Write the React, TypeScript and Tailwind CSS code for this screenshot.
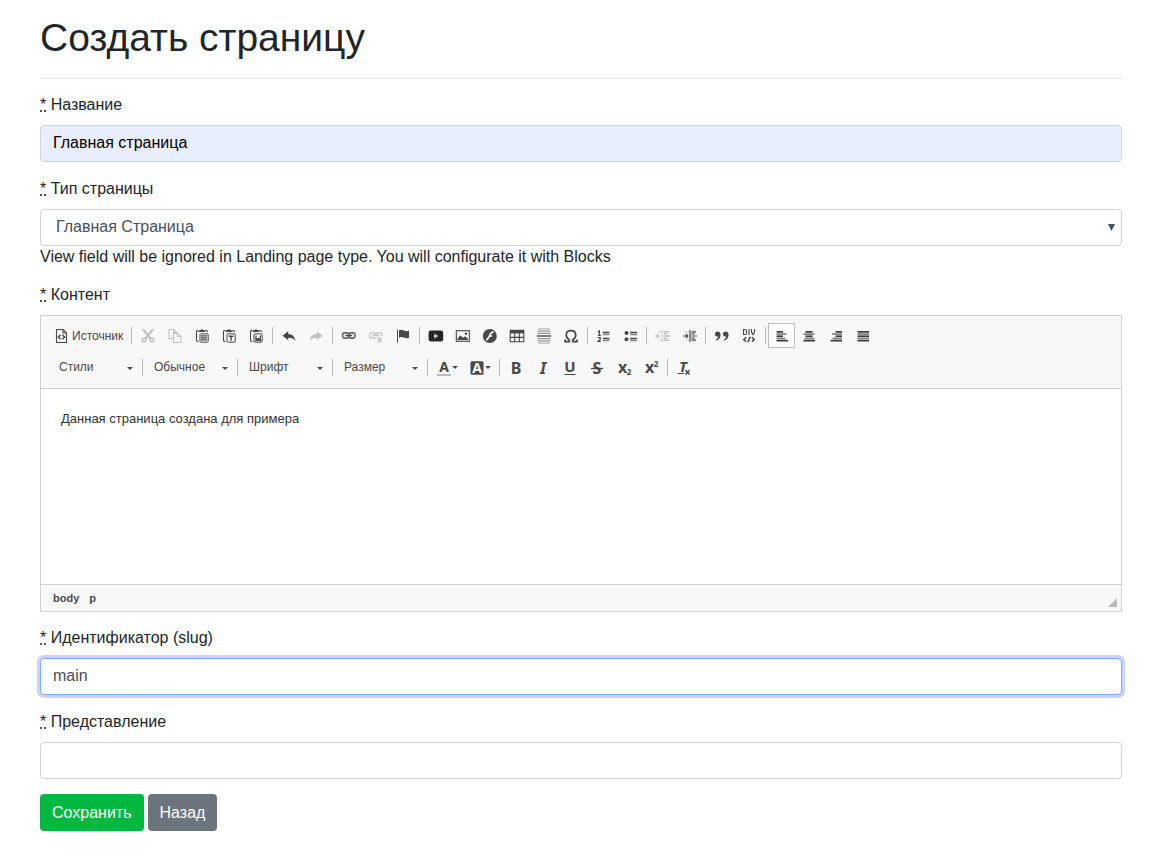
import { useState } from 'react';
import type { ReactNode } from 'react';

const INK = '#484848';

function Icon({ children, size = 16 }: { children: ReactNode; size?: number }) {
  return (
    <svg
      width={size}
      height="16"
      viewBox={`0 0 ${size} 16`}
      fill="none"
      stroke={INK}
      aria-hidden="true"
      className="shrink-0 overflow-visible"
    >
      {children}
    </svg>
  );
}

const Glyph = ({ x = 8, y, size, children, className = 'font-bold', fill = INK }: {
  x?: number; y: number; size: number; children: string; className?: string; fill?: string;
}) => (
  <text
    x={x}
    y={y}
    fontSize={size}
    textAnchor="middle"
    fill={fill}
    stroke="none"
    className={`font-['Noto_Sans','Open_Sans',sans-serif] ${className}`}
  >
    {children}
  </text>
);

const Bars = ({ rows }: { rows: [number, number][] }) => (
  <>
    {rows.map(([x, w], i) => (
      <rect key={i} x={x} y={3 + i * 2.2} width={w} height="1.7" fill={i % 2 ? '#808080' : '#3a3a3a'} stroke="none" />
    ))}
  </>
);

const Clipboard = ({ children }: { children: ReactNode }) => (
  <Icon>
    <path d="M4 2.5H3.2Q2.5 2.5 2.5 3.5V12.5Q2.5 13.5 4.5 13.5M11.5 2.5H12.5Q13.5 2.5 13.5 4.2" strokeWidth="1.1" />
    <path d="M4.5 4V2.3H6.3Q8 .2 9.7 2.3H11.5V4Z" fill={INK} stroke="none" />
    <rect x="6" y="5.8" width="8.2" height="8.4" rx="1" />
    {children}
  </Icon>
);

const icons = {
  source: (
    <Icon size={13}>
      <path d="M1.5 1.5H8L11.5 5V14.5H1.5ZM8 1.5V5H11.5" strokeWidth="1.1" />
      <path d="M5.6 6.8 3.4 9 5.6 11.2M7.4 6.8 9.6 9 7.4 11.2" strokeWidth="1.5" />
    </Icon>
  ),
  cut: (
    <Icon>
      <path d="M3 1.5 10.8 10.8M13 1.5 5.2 10.8" strokeWidth="2.2" />
      <circle cx="4" cy="12" r="1.8" strokeWidth="1.5" />
      <circle cx="12" cy="12" r="1.8" strokeWidth="1.5" />
    </Icon>
  ),
  copy: (
    <Icon>
      <path d="M6 10.5H2V1.5H6.7L9.5 4.2V5M6.5 1.5V4.5H9.5" strokeWidth="1.1" />
      <path d="M6.5 5.5H10.7L14 8.3V14.5H6.5ZM10.5 5.5V8.5H14" fill="#f8f8f8" strokeWidth="1.1" />
    </Icon>
  ),
  paste: <Clipboard><path d="M7 7.8H13M7 9.8H13M7 11.8H13" strokeWidth="1.3" /></Clipboard>,
  pasteText: <Clipboard><path d="M7.8 8.3H12.4M10.1 8.3V12.8" strokeWidth="1.4" /></Clipboard>,
  pasteWord: <Clipboard><path d="M8 7.5V12.5L10.1 10.5 12.3 12.5V7.5M8 12.3H12.3" strokeWidth="1.3" /></Clipboard>,
  undo: (
    <Icon><path d="M1.5 7.7 7.2 3.2V6Q13.3 6.2 14.5 13 11.7 9.6 7.2 9.8V12.2Z" fill={INK} stroke="none" /></Icon>
  ),
  redo: (
    <Icon><path d="M14.5 7.7 8.8 3.2V6Q2.7 6.2 1.5 13 4.3 9.6 8.8 9.8V12.2Z" fill={INK} stroke="none" /></Icon>
  ),
  link: (
    <Icon>
      <rect x="1.6" y="4.9" width="6.2" height="5.2" rx="2" stroke="#666" strokeWidth="1.6" />
      <rect x="7.8" y="4.9" width="6.2" height="5.2" rx="2" stroke="#666" strokeWidth="1.6" />
      <path d="M4.3 7.5H11.3" strokeWidth="1.5" />
    </Icon>
  ),
  unlink: (
    <Icon>
      <path d="M8 10.1H4Q1.6 10.1 1.6 8.1V6.9Q1.6 4.9 4 4.9H5.8Q7.8 4.9 7.8 6.9V8.1M7.8 8V6.9Q7.8 4.9 9.8 4.9H12Q14 4.9 14 6.9V8.1M4.3 7.5H11.3" strokeWidth="1.4" />
      <path d="M9.5 9.5 13.5 13.8M13.5 9.5 9.5 13.8" strokeWidth="1.5" />
    </Icon>
  ),
  flag: (
    <Icon>
      <path d="M2.5 1.5V14.5" />
      <path d="M4 2.2Q6.5 1 9 2.5T14 2.4V9.8Q11.5 11 9 9.6T4 9.7Z" fill={INK} stroke="none" />
    </Icon>
  ),
  video: (
    <Icon>
      <rect x=".6" y="2.6" width="14.6" height="11" rx="2.4" fill="#262626" stroke="none" />
      <path d="M6.2 5.8V10.4L10.4 8.1Z" fill="#d8d8d8" stroke="none" />
    </Icon>
  ),
  image: (
    <Icon>
      <rect x="1.3" y="2.7" width="13" height="10.6" strokeWidth="1.1" />
      <path d="M2.6 12V10.2L5.4 7.4 8 9.8 10.3 8.3 13.1 11V12Z" fill={INK} stroke="none" />
      <circle cx="11" cy="5.7" r="1.2" fill={INK} stroke="none" />
    </Icon>
  ),
  flash: (
    <Icon>
      <circle cx="7.8" cy="8" r="7" fill={INK} stroke="none" />
      <path d="M11.6 3.8Q8.8 4.2 7.9 7T4.3 12.3M7.1 8H10.2" stroke="#f8f8f8" strokeWidth="1.7" />
    </Icon>
  ),
  table: (
    <Icon>
      <path d="M1.2 5V13.7H14.8V5M1.2 9.4H14.8M5.7 5V13.7M10.3 5V13.7" strokeWidth="1.1" />
      <rect x=".7" y="1.8" width="14.6" height="3.6" fill={INK} stroke="none" />
    </Icon>
  ),
  rule: (
    <Icon>
      <path d="M2 1H14M2 3.2H14M2 5.4H14M2 10.6H14M2 12.8H14M2 15H14" stroke="#999" strokeWidth="1.2" />
      <path d="M1 8H15" strokeWidth="1.4" />
    </Icon>
  ),
  omega: (
    <Icon>
      <path d="M2 13.7H6.3V12Q3.3 10.4 3.3 7.1 3.3 2.6 8 2.6T12.7 7.1Q12.7 10.4 9.7 12V13.7H14M2 11.6V14.2M14 11.6V14.2" strokeWidth="1.7" />
    </Icon>
  ),
  numbered: (
    <Icon>
      <path d="M2 4 3.4 3V7.3M2 7.3H4.8M1.8 9.7H4.3V11.3L2.2 13.3H4.8" strokeWidth="1.2" />
      <path d="M6.8 4.5H13.5M6.8 10.5H13.5" strokeWidth="1.3" />
      <path d="M6.8 6.5H13.5M6.8 12.5H13.5" stroke="#858585" strokeWidth="1.3" />
    </Icon>
  ),
  bulleted: (
    <Icon>
      <circle cx="3.5" cy="5" r="2" fill={INK} stroke="none" />
      <circle cx="3.5" cy="11.2" r="2" fill={INK} stroke="none" />
      <path d="M7 4.5H14M7 10.5H14" strokeWidth="1.3" />
      <path d="M7 6.5H14M7 12.5H14" stroke="#858585" strokeWidth="1.3" />
    </Icon>
  ),
  outdent: (
    <Icon>
      <path d="M7.5 2V14" strokeDasharray="1.4 .8" strokeWidth="1.3" />
      <path d="M9 3.8H14M9 5.8H12.5M9 8H15M9 10.2H12.5M9 12.2H14" strokeWidth="1.5" />
      <path d="M1 8H6M3.5 5.8 1.2 8 3.5 10.2M3.5 4H7M4.5 12H7" strokeWidth="1.2" />
    </Icon>
  ),
  indent: (
    <Icon>
      <path d="M8 2V14" strokeWidth="1.2" />
      <path d="M9.5 3.8H14M9.5 5.8H12.5M9.5 8H15M9.5 10.2H12.5M9.5 12.2H14" strokeWidth="1.2" />
      <path d="M1 8H5.6M3.8 5.8 6 8 3.8 10.2" strokeWidth="1.2" />
      <path d="M3.5 4H7M4.5 12H7" stroke="#999" strokeDasharray="1 1" />
    </Icon>
  ),
  quote: (
    <Icon>
      <path d="M1 6Q1 3.5 3.6 3.5 6.6 3.6 6.6 7 6.4 11.3 2.2 12.6L1.8 11.7Q4 10.6 4.2 8.6 1 8.8 1 6ZM9 6Q9 3.5 11.6 3.5 14.6 3.6 14.6 7 14.4 11.3 10.2 12.6L9.8 11.7Q12 10.6 12.2 8.6 9 8.8 9 6Z" fill={INK} stroke="none" />
    </Icon>
  ),
  div: (
    <Icon>
      <path d="M2.5 1.5V6.5H4Q5.5 6.5 5.5 5V3Q5.5 1.5 4 1.5ZM8 1V7M10.5 1V4L12 6.7 13.5 4V1" strokeWidth="1.1" />
      <path d="M5 9.3 2.8 11.5 5 13.7M11 9.3 13.2 11.5 11 13.7M9.3 8.8 6.9 14.2" strokeWidth="1.6" />
    </Icon>
  ),
  left: <Icon><Bars rows={[[2.5, 6.5], [2.5, 10], [2.5, 6.5], [2.5, 9], [2.5, 11.5]]} /></Icon>,
  center: <Icon><Bars rows={[[4.5, 7], [2.5, 11], [4.5, 7], [3.5, 9.5], [2.5, 11.5]]} /></Icon>,
  right: <Icon><Bars rows={[[7.5, 6.5], [4, 10], [7.5, 6.5], [4.5, 9.5], [2.5, 11.5]]} /></Icon>,
  justify: <Icon><Bars rows={[[2.5, 11.5], [2.5, 11.5], [2.5, 11.5], [2.5, 11.5], [2.5, 11.5]]} /></Icon>,
  bold: <Icon><Glyph y={14} size={16}>B</Glyph></Icon>,
  italic: <Icon><Glyph y={14} size={16} className="font-bold italic">I</Glyph></Icon>,
  underline: <Icon><Glyph y={12} size={15}>U</Glyph><path d="M2.5 14.5H13.5" /></Icon>,
  strike: <Icon><Glyph y={14} size={16}>S</Glyph><path d="M2 8.5H14" strokeWidth="1.3" /></Icon>,
  sub: <Icon><Glyph x={6.5} y={13} size={16}>x</Glyph><Glyph x={13} y={15} size={8}>2</Glyph></Icon>,
  sup: <Icon><Glyph x={6.5} y={13} size={16}>x</Glyph><Glyph x={13} y={7} size={8}>2</Glyph></Icon>,
  clear: (
    <Icon>
      <Glyph x={7} y={12} size={15} className="font-bold italic">T</Glyph>
      <path d="M1.5 13.5H8" />
      <path d="M9.5 10.3 13.5 14.5M13.5 10.3 9.5 14.5" strokeWidth="1.6" />
    </Icon>
  ),
  textColor: <Icon><Glyph y={12} size={14}>A</Glyph><path d="M1 15H15" stroke="#999" strokeWidth="1.3" /></Icon>,
  fillColor: (
    <Icon>
      <rect x="1.5" y="1.2" width="13" height="13.6" rx="1.5" fill={INK} stroke="none" />
      <Glyph y={13} size={14} fill="#f8f8f8">A</Glyph>
    </Icon>
  ),
};

type IconName = keyof typeof icons;
type Tool = { icon: IconName; label: string; disabled?: boolean };

const mainGroups: Tool[][] = [
  [
    { icon: 'cut', label: 'Вырезать', disabled: true },
    { icon: 'copy', label: 'Копировать', disabled: true },
    { icon: 'paste', label: 'Вставить' },
    { icon: 'pasteText', label: 'Вставить только текст' },
    { icon: 'pasteWord', label: 'Вставить из Word' },
  ],
  [
    { icon: 'undo', label: 'Отменить' },
    { icon: 'redo', label: 'Повторить', disabled: true },
  ],
  [
    { icon: 'link', label: 'Вставить ссылку' },
    { icon: 'unlink', label: 'Убрать ссылку', disabled: true },
    { icon: 'flag', label: 'Якорь' },
  ],
  [
    { icon: 'video', label: 'Видео' },
    { icon: 'image', label: 'Изображение' },
    { icon: 'flash', label: 'Flash' },
    { icon: 'table', label: 'Таблица' },
    { icon: 'rule', label: 'Горизонтальная линия' },
    { icon: 'omega', label: 'Специальный символ' },
  ],
];

const paragraphGroups: Tool[][] = [
  [
    { icon: 'numbered', label: 'Нумерованный список' },
    { icon: 'bulleted', label: 'Маркированный список' },
  ],
  [
    { icon: 'outdent', label: 'Уменьшить отступ', disabled: true },
    { icon: 'indent', label: 'Увеличить отступ' },
  ],
  [
    { icon: 'quote', label: 'Цитата' },
    { icon: 'div', label: 'Создать div' },
  ],
];

const alignTools: Tool[] = [
  { icon: 'left', label: 'По левому краю' },
  { icon: 'center', label: 'По центру' },
  { icon: 'right', label: 'По правому краю' },
  { icon: 'justify', label: 'По ширине' },
];

const styleTools: Tool[] = [
  { icon: 'bold', label: 'Полужирный' },
  { icon: 'italic', label: 'Курсив' },
  { icon: 'underline', label: 'Подчеркнутый' },
  { icon: 'strike', label: 'Зачеркнутый' },
  { icon: 'sub', label: 'Подстрочный индекс' },
  { icon: 'sup', label: 'Надстрочный индекс' },
];

function ToolButton({ tool, pressed, onClick }: { tool: Tool; pressed?: boolean; onClick?: () => void }) {
  return (
    <button
      type="button"
      aria-label={tool.label}
      aria-pressed={pressed}
      disabled={tool.disabled}
      onClick={onClick}
      className={`flex h-[25px] w-[27px] items-center justify-center border disabled:opacity-30 ${
        pressed ? 'border-[#bcbcbc] bg-white' : 'border-transparent'
      }`}
    >
      {icons[tool.icon]}
    </button>
  );
}

const Separator = ({ tight = false }: { tight?: boolean }) => (
  <span className={`mr-[2px] h-[17px] w-px bg-[#bcbcbc] ${tight ? 'ml-[2px]' : 'ml-[3px]'}`} />
);

const Caret = () => (
  <svg width="6" height="3" viewBox="0 0 6 3" aria-hidden="true" className="shrink-0">
    <path d="M0 0H6L3 3Z" fill={INK} />
  </svg>
);

function Combo({ label }: { label: string }) {
  return (
    <div className="grid w-[89px] items-center">
      <select
        aria-label={label}
        className="col-start-1 row-start-1 h-[25px] w-full appearance-none bg-transparent pb-[2px] pl-[9px] pr-4 text-[#484848]"
      >
        <option>{label}</option>
      </select>
      <span className="pointer-events-none col-start-1 row-start-1 mr-[6px] mt-[2px] justify-self-end">
        <Caret />
      </span>
    </div>
  );
}

function ColorButton({ icon, label }: { icon: IconName; label: string }) {
  return (
    <button type="button" aria-label={label} className="flex h-[25px] w-[33px] items-center justify-center">
      {icons[icon]}
      <Caret />
    </button>
  );
}

function Editor() {
  const [align, setAlign] = useState<IconName>('left');
  return (
    <div className="border border-[#d1d1d1] bg-[#f8f8f8]">
      <div className="flex flex-col gap-[7px] border-b border-[#d1d1d1] px-[9px] pb-2 pt-[7px] text-[12px] text-[#484848]">
        <div className="flex flex-wrap items-center">
          <button type="button" className="flex h-[25px] w-[78px] items-center gap-1 pl-[5px]">
            {icons.source}
            Источник
          </button>
          {mainGroups.map((group) => (
            <div key={group[0].icon} className="flex items-center">
              <Separator />
              {group.map((tool) => <ToolButton key={tool.icon} tool={tool} />)}
            </div>
          ))}
          {paragraphGroups.map((group, i) => (
            <div key={group[0].icon} className="flex items-center">
              <Separator tight={i > 0} />
              {group.map((tool) => <ToolButton key={tool.icon} tool={tool} />)}
            </div>
          ))}
          <div className="flex items-center">
            <Separator />
            {alignTools.map((tool) => (
              <ToolButton
                key={tool.icon}
                tool={tool}
                pressed={align === tool.icon}
                onClick={() => setAlign(tool.icon)}
              />
            ))}
          </div>
        </div>
        <div className="flex flex-wrap items-center">
          {['Стили', 'Обычное', 'Шрифт', 'Размер'].map((label) => (
            <div key={label} className="flex items-center">
              <Combo label={label} />
              <Separator />
            </div>
          ))}
          <ColorButton icon="textColor" label="Цвет текста" />
          <ColorButton icon="fillColor" label="Цвет фона" />
          <Separator />
          {styleTools.map((tool) => <ToolButton key={tool.icon} tool={tool} />)}
          <Separator />
          <ToolButton tool={{ icon: 'clear', label: 'Убрать форматирование' }} />
        </div>
      </div>
      <textarea
        id="content"
        defaultValue="Данная страница создана для примера"
        className="block h-[195px] w-full resize-none bg-white px-5 py-5 text-[13px] leading-5 text-[#333] outline-none"
      />
      <div className="flex h-[27px] items-center gap-[10px] border-t border-[#d1d1d1] pl-3 pr-1 text-[11px] font-bold text-[#484848]">
        <span>body</span>
        <span>p</span>
        <svg width="9" height="9" viewBox="0 0 9 9" aria-hidden="true" className="mb-1 ml-auto self-end">
          <path d="M9 0V9H0Z" fill="#bcbcbc" />
        </svg>
      </div>
    </div>
  );
}

function Label({ htmlFor, children }: { htmlFor: string; children: ReactNode }) {
  return (
    <label htmlFor={htmlFor} className="mb-2 block leading-6">
      <abbr title="Обязательное поле" className="underline decoration-dotted">*</abbr> {children}
    </label>
  );
}

export default function App() {
  return (
    <main className="bg-white pb-8 pl-10 pr-[34px] pt-[15px] font-['Liberation_Sans',Arial,sans-serif] text-[16px] text-[#212529]">
      <h1 className="text-[39px] leading-[46px]">Создать страницу</h1>
      <hr className="mb-[14px] mt-[17px] border-[#e5e5e5]" />
      <form onSubmit={(event) => event.preventDefault()}>
        <div className="mb-[15px]">
          <Label htmlFor="title">Название</Label>
          <input
            id="title"
            defaultValue="Главная страница"
            className="block h-[37px] w-full rounded border border-[#ced4da] bg-[#e8eefe] px-3 pb-[2px] text-black"
          />
        </div>
        <div className="mb-[15px]">
          <Label htmlFor="type">Тип страницы</Label>
          <div className="grid items-center">
            <select
              id="type"
              className="col-start-1 row-start-1 h-[37px] w-full appearance-none rounded border border-[#ced4da] bg-white px-[15px] pb-[2px] text-[#495057]"
            >
              <option>Главная Страница</option>
            </select>
            <svg
              width="7"
              height="7"
              viewBox="0 0 7 7"
              aria-hidden="true"
              className="pointer-events-none col-start-1 row-start-1 mr-[7px] justify-self-end"
            >
              <path d="M0 0H7L3.5 7Z" fill="#495057" />
            </svg>
          </div>
          <p className="leading-[22px]">
            View field will be ignored in Landing page type. You will configurate it with Blocks
          </p>
        </div>
        <div className="mb-[14px]">
          <Label htmlFor="content">Контент</Label>
          <Editor />
        </div>
        <div className="mb-[15px]">
          <Label htmlFor="slug">Идентификатор (slug)</Label>
          <input
            id="slug"
            defaultValue="main"
            className="block h-[37px] w-full rounded border border-[#80acff] bg-white px-3 pb-[2px] text-[#495057] outline-none ring-3 ring-[#d0d0ff]"
          />
        </div>
        <div className="mb-[15px]">
          <Label htmlFor="view">Представление</Label>
          <input
            id="view"
            className="block h-[37px] w-full rounded border border-[#ced4da] bg-white px-3 pb-[2px] text-[#495057]"
          />
        </div>
        <div className="flex gap-1">
          <button type="submit" className="h-[37px] rounded bg-[#00b83f] px-3 text-white">Сохранить</button>
          <button type="button" className="h-[37px] rounded bg-[#6c757d] px-3 text-white">Назад</button>
        </div>
      </form>
    </main>
  );
}
